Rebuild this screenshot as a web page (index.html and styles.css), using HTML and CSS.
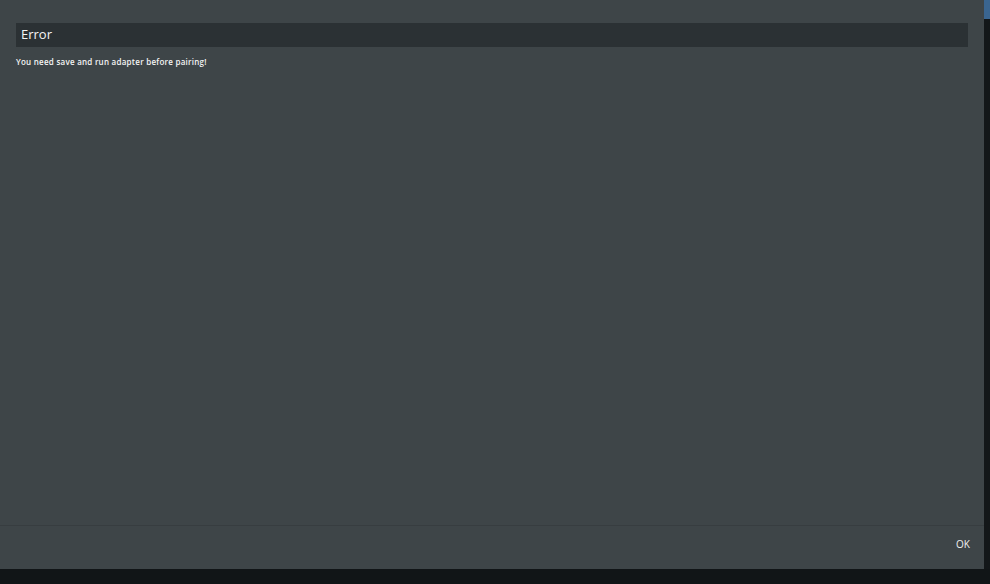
FILE: index.html
```html
<!DOCTYPE html>
<html lang="en">
<head>
    <meta charset="UTF-8">
    <title>Error</title>
    <link rel="stylesheet" href="styles.css">
</head>
<body>
    <div class="page">
        <div class="dialog">
            <div class="content">
                <h2 class="title">Error</h2>
                <p class="message">You need save and run adapter before pairing!</p>
            </div>
            <div class="footer">
                <button class="ok">OK</button>
            </div>
        </div>
        <div class="side">
            <div class="side-top"></div>
        </div>
    </div>
    <div class="bottom"></div>
</body>
</html>
```

FILE: styles.css
```css
body { margin: 0; background: #121618; font-family: "Open Sans", "Noto Sans", sans-serif; color: #fff; height: 584px; overflow: hidden; }
.page { display: flex; height: 569px; }
.dialog { width: 984px; background: #3e4548; display: flex; flex-direction: column; }
.content { flex-grow: 1; padding: 23px 16px 0 16px; }
.title { margin: 0; background: #2b3134; height: 24px; line-height: 23px; padding: 0 5px; font-size: 13px; font-weight: 500; color: #f5f5f5; }
.message { margin: 9px 0 0 0; font-size: 8px; font-weight: 600; line-height: 11px; letter-spacing: 0.25px; color: #f4f4f4; }
.footer { height: 43px; border-top: 1px solid #373d40; display: flex; align-items: center; justify-content: flex-end; padding-right: 14px; }
.ok { background: none; border: none; color: #f0f0f0; font-family: inherit; font-size: 10px; padding: 0; margin-bottom: 7px; }
.side { width: 6px; background: #131719; }
.side-top { height: 19px; background: #3a6590; }
.bottom { height: 15px; background: #111517; }
```
